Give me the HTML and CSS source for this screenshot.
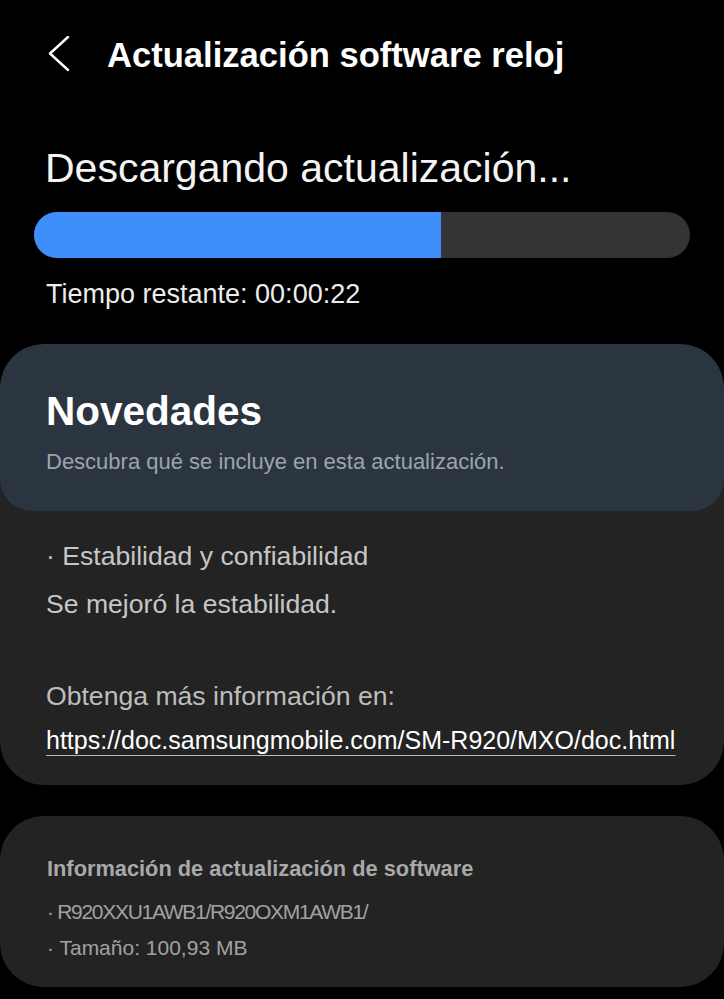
FILE: index.html
```html
<!DOCTYPE html>
<html lang="es">
<head>
  <meta charset="UTF-8">
  <title>Actualización software reloj</title>
  <link rel="stylesheet" href="styles.css">
</head>
<body>
  <header class="topbar">
    <svg class="back" width="22" height="40" viewBox="0 0 22 40">
      <polyline points="20,1 2,17.5 20,34" fill="none" stroke="#fff" stroke-width="2.4" stroke-linecap="round" stroke-linejoin="round"/>
    </svg>
    <h1 class="title">Actualización software reloj</h1>
  </header>

  <section class="download">
    <h2 class="status">Descargando actualización...</h2>
    <div class="bar"><div class="fill" style="width: 62%;"></div></div>
    <p class="remaining">Tiempo restante: 00:00:22</p>
  </section>

  <section class="card news">
    <div class="news-head">
      <h2 class="news-title">Novedades</h2>
      <p class="news-sub">Descubra qué se incluye en esta actualización.</p>
    </div>
    <div class="news-body">
      <p class="line">· Estabilidad y confiabilidad</p>
      <p class="line">Se mejoró la estabilidad.</p>
      <p class="line more">Obtenga más información en:</p>
      <p class="line link-line"><a class="link" href="#">https://doc.samsungmobile.com/SM-R920/MXO/doc.html</a></p>
    </div>
  </section>

  <section class="card info">
    <h3 class="info-title">Información de actualización de software</h3>
    <p class="info-item code">· R920XXU1AWB1/R920OXM1AWB1/</p>
    <p class="info-item">· Tamaño: 100,93 MB</p>
  </section>
</body>
</html>
```

FILE: styles.css
```css
* { box-sizing: border-box; }
body { margin: 0; background: #000; color: #fff; font-family: "Liberation Sans", Arial, sans-serif; width: 724px; }
h1, h2, h3, p { margin: 0; }

.topbar { height: 112px; display: flex; align-items: center; padding-left: 48px; gap: 37px; }
.back { display: block; }
.title { font-size: 34.6px; font-weight: bold; line-height: 1.15; color: #fff; }

.download { padding: 32px 34px 0; }
.status { font-size: 41px; font-weight: normal; line-height: 48px; color: #f4f4f4; padding-left: 11px; }
.bar { margin-top: 20px; height: 46px; border-radius: 23px; background: #343434; overflow: hidden; }
.fill { height: 100%; background: #3f8ffb; }
.remaining { margin-top: 20px; font-size: 27px; line-height: 32px; color: #ececec; padding-left: 12px; }

.card { background: #232323; border-radius: 44px; overflow: hidden; }
.news { margin-top: 34px; }
.news-head { background: #2b3540; border-radius: 44px 44px 32px 32px; padding: 43px 46px 36px; }
.news-title { font-size: 40.5px; font-weight: bold; line-height: 48px; color: #fff; }
.news-sub { margin-top: 14px; font-size: 22px; line-height: 26px; color: #9ea4aa; }
.news-body { padding: 29px 46px 29px; }
.line { font-size: 26.6px; line-height: 32px; color: #c6c6c6; margin-top: 16px; }
.line:first-child { margin-top: 0; }
.line.more { margin-top: 60px; color: #bdbdbd; }
.line.link-line { margin-top: 12px; font-size: 25px; }
.link { color: #fff; text-decoration: underline; text-decoration-color: #b8b8b8; text-decoration-thickness: 1px; text-underline-offset: 6px; }

.info { margin-top: 31px; padding: 40px 47px 25px; height: 171px; }
.info-title { font-size: 21.8px; font-weight: bold; line-height: 26px; color: #a9a9a9; }
.info-item { margin-top: 10px; font-size: 21px; line-height: 26px; color: #a2a2a2; }
.info-item.code { margin-top: 17px; letter-spacing: -1.3px; }
```
